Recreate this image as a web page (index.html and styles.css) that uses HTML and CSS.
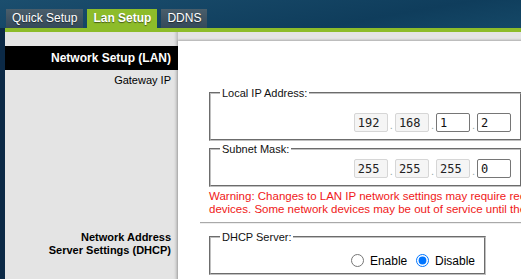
FILE: index.html
```html
<!DOCTYPE html>
<html lang="en">
<head>
  <meta charset="UTF-8">
  <meta name="viewport" content="width=device-width, initial-scale=1.0">
  <title>Lan Setup</title>
  <link rel="stylesheet" href="styles.css">
</head>
<body>
  <div class="page">
    <div class="header">
      <nav class="tabs">
        <a class="tab" href="#">Quick Setup</a>
        <a class="tab active" href="#">Lan Setup</a>
        <a class="tab" href="#">DDNS</a>
      </nav>
    </div>

    <div class="main">
      <aside class="sidebar">
        <div class="section-title">Network Setup (LAN)</div>
        <div class="label">Gateway IP</div>
        <div class="label label-dhcp">Network Address<br>Server Settings (DHCP)</div>
      </aside>

      <section class="content">
        <fieldset class="group group-ip group-first">
          <legend>Local IP Address:</legend>
          <div class="ip-row">
            <input class="ip-input locked" type="text" value="192" readonly>
            <span class="dot">.</span>
            <input class="ip-input locked" type="text" value="168" readonly>
            <span class="dot">.</span>
            <input class="ip-input" type="text" value="1">
            <span class="dot">.</span>
            <input class="ip-input" type="text" value="2">
          </div>
        </fieldset>

        <fieldset class="group group-ip">
          <legend>Subnet Mask:</legend>
          <div class="ip-row">
            <input class="ip-input locked" type="text" value="255" readonly>
            <span class="dot">.</span>
            <input class="ip-input locked" type="text" value="255" readonly>
            <span class="dot">.</span>
            <input class="ip-input locked" type="text" value="255" readonly>
            <span class="dot">.</span>
            <input class="ip-input" type="text" value="0">
          </div>
        </fieldset>

        <p class="warning">
          Warning: Changes to LAN IP network settings may require reconnecting all network<br>
          devices. Some network devices may be out of service until the changes take effect.
        </p>

        <hr class="divider">

        <fieldset class="group group-dhcp">
          <legend>DHCP Server:</legend>
          <div class="radio-row">
            <label><input type="radio" name="dhcp"> Enable</label>
            <label><input type="radio" name="dhcp" checked> Disable</label>
          </div>
        </fieldset>
      </section>
    </div>
  </div>
</body>
</html>
```

FILE: styles.css
```css
body {
  margin: 0;
  background: #0b2946;
  font-family: "Liberation Sans", Arial, sans-serif;
  font-size: 11px;
  color: #000;
  overflow: hidden;
}

.page {
  width: 900px;
}

/* header with tabs */
.header {
  height: 28px;
  padding-left: 6px;
  display: flex;
  align-items: flex-end;
  background: linear-gradient(170deg, #1b4e6e 0%, #0f3d5c 45%, #1f5d7c 100%);
}
.tabs {
  display: flex;
  gap: 4px;
}
.tab {
  height: 19px;
  line-height: 19px;
  padding: 0 6px;
  font-size: 12px;
  color: #fff;
  text-decoration: none;
  background: linear-gradient(#4a5e6b, #34495a);
  text-shadow: 0 1px 1px rgba(0, 0, 0, 0.5);
}
.tab.active {
  background: #8dbc2a;
  font-weight: bold;
}

/* body area */
.main {
  margin-left: 5px;
  border-top: 4px solid #8dbc2a;
  background: #e4e4e4;
  display: flex;
  min-height: 260px;
}
.sidebar {
  width: 173px;
  flex-shrink: 0;
  padding-top: 14px;
  box-shadow: inset -4px 0 3px -2px rgba(0, 0, 0, 0.18);
}
.section-title {
  height: 24px;
  line-height: 24px;
  padding-right: 7px;
  text-align: right;
  background: #000;
  color: #fff;
  font-size: 12px;
  font-weight: bold;
}
.label {
  margin-top: 3px;
  padding-right: 7px;
  line-height: 14px;
  text-align: right;
}
.label-dhcp {
  margin-top: 144px;
  line-height: 13px;
  font-weight: bold;
}

.content {
  flex: 1;
  margin-top: 9px;
  padding: 46px 0 0 22px;
  background: #fff;
  box-shadow: 0 -1px 2px rgba(0, 0, 0, 0.25);
}

/* fieldsets */
.group {
  margin: 0 0 2px 9px;
  padding: 4px 9px 7px;
  border: 2px groove #c0c0c0;
  box-sizing: border-box;
}
.group legend {
  padding: 0 2px;
  color: #111;
}
.group-ip {
  width: 313px;
}
.group-dhcp {
  width: 277px;
  padding-bottom: 5px;
}
.group-first .ip-row {
  margin-top: 10px;
}

.ip-row {
  display: flex;
  justify-content: flex-end;
  align-items: flex-end;
}
.ip-input {
  width: 34px;
  height: 19px;
  box-sizing: border-box;
  margin: 0;
  padding: 0 3px;
  border: 1px solid #767676;
  border-radius: 2px;
  font: 12px "DejaVu Sans Mono", monospace;
  color: #111;
  background: #fff;
}
.ip-input.locked {
  background: #f5f5f5;
  border-color: #d6d6d6;
  color: #222;
}
.dot {
  margin: 0 2px;
  color: #9aa;
  line-height: 13px;
}

.warning {
  margin: 3px 0 0 9px;
  line-height: 13px;
  font-size: 11.5px;
  color: #f01818;
  white-space: nowrap;
}

.divider {
  margin: 6px 0 7px 0;
  border: 0;
  border-top: 1px solid #a9a9a9;
  border-bottom: 1px solid #eee;
}

.radio-row {
  padding-top: 4px;
  text-align: right;
  font-size: 12px;
}
.radio-row input {
  vertical-align: -2px;
}
```
